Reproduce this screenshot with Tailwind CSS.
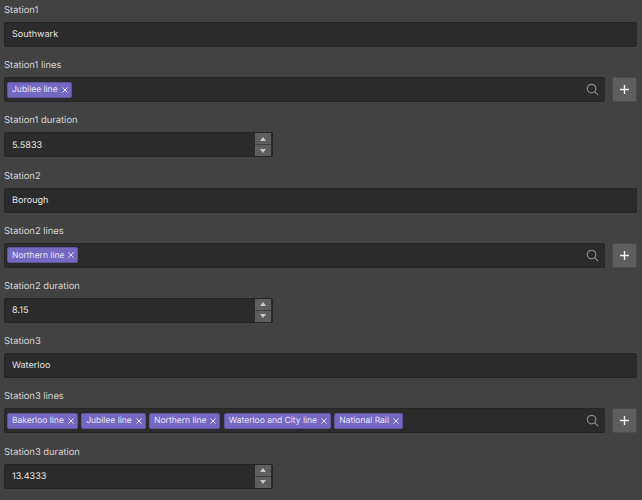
<!DOCTYPE html>
<html lang="en">
  <head>
    <meta charset="UTF-8" />
    <title>Stations</title>
    <script src="https://cdn.jsdelivr.net/npm/@tailwindcss/browser@4"></script>
  </head>
  <body class="bg-[#424242] h-[500px] overflow-hidden font-['Inter',sans-serif] [text-rendering:geometricPrecision] antialiased text-[9.4px] text-[#d6d6d6]">
    <main class="flex flex-col gap-[12.2px] pt-[4px] pl-[4px] pr-[5px]">
      <!-- Station 1 -->
      <div>
        <label class="block h-[18px] leading-[14px]">Station1</label>
        <div class="h-[25px] flex items-center px-[7px] rounded-[2px] bg-[#2b2b2b] border border-[#252525] text-[9.1px] text-[#e4e4e4]"><span class="pt-[1px]">Southwark</span></div>
      </div>
      <div>
        <label class="block h-[18px] leading-[14px]">Station1 lines</label>
        <div class="flex gap-[7px]">
          <div class="flex-1 h-[25px] flex items-center pl-[2px] pr-[5px] rounded-[2px] bg-[#2b2b2b] border border-[#252525]">
            <span class="h-[16px] flex items-center gap-[4px] pl-[4px] pr-[3px] rounded-[2px] bg-[#7468c2] border border-[#5f5599] text-[8.5px] text-[#e8e6f5]"><span class="pt-[2px]">Jubilee line</span>
              <svg class="w-[6px] h-[6px]" viewBox="0 0 8 8" fill="none" stroke="#e8e6f5" stroke-width="1.3"><path d="M.5.5l7 7M7.5.5l-7 7" /></svg>
            </span>
            <svg class="ml-auto w-[13px] h-[13px]" viewBox="0 0 14 14" fill="none" stroke="#8a8a8a" stroke-width="1.3"><circle cx="6" cy="6" r="4.6" /><path d="M9.3 9.3l3.7 3.7" /></svg>
          </div>
          <button class="w-[25px] h-[25px] flex items-center justify-center rounded-[2px] bg-[#5e5e5e] border border-[#4c4c4c]">
            <svg class="w-[9px] h-[9px]" viewBox="0 0 9 9" fill="none" stroke="#f0f0f0" stroke-width="1.4"><path d="M4.5 0v9M0 4.5h9" /></svg>
          </button>
        </div>
      </div>
      <div>
        <label class="block h-[18px] leading-[14px]">Station1 duration</label>
        <div class="w-[269px] h-[25px] flex items-center pl-[7px] pr-[1px] rounded-[2px] bg-[#2b2b2b] border border-[#252525] text-[9.1px] text-[#e4e4e4]"><span class="pt-[1px]">5.5833</span>
          <div class="ml-auto w-[16px] bg-[#404040] flex flex-col gap-[1px]">
            <span class="h-[11px] flex items-center justify-center bg-[#5e5e5e]"><svg class="w-[6px] h-[4px]" viewBox="0 0 6 4" fill="#c8c8c8"><path d="M3 0l3 4H0z" /></svg></span>
            <span class="h-[11px] flex items-center justify-center bg-[#5e5e5e]"><svg class="w-[6px] h-[4px]" viewBox="0 0 6 4" fill="#c8c8c8"><path d="M0 0h6L3 4z" /></svg></span>
          </div>
        </div>
      </div>

      <!-- Station 2 -->
      <div>
        <label class="block h-[18px] leading-[14px]">Station2</label>
        <div class="h-[25px] flex items-center px-[7px] rounded-[2px] bg-[#2b2b2b] border border-[#252525] text-[9.1px] text-[#e4e4e4]"><span class="pt-[1px]">Borough</span></div>
      </div>
      <div>
        <label class="block h-[18px] leading-[14px]">Station2 lines</label>
        <div class="flex gap-[7px]">
          <div class="flex-1 h-[25px] flex items-center pl-[2px] pr-[5px] rounded-[2px] bg-[#2b2b2b] border border-[#252525]">
            <span class="h-[16px] flex items-center gap-[4px] pl-[4px] pr-[3px] rounded-[2px] bg-[#7468c2] border border-[#5f5599] text-[8.5px] text-[#e8e6f5]"><span class="pt-[2px]">Northern line</span>
              <svg class="w-[6px] h-[6px]" viewBox="0 0 8 8" fill="none" stroke="#e8e6f5" stroke-width="1.3"><path d="M.5.5l7 7M7.5.5l-7 7" /></svg>
            </span>
            <svg class="ml-auto w-[13px] h-[13px]" viewBox="0 0 14 14" fill="none" stroke="#8a8a8a" stroke-width="1.3"><circle cx="6" cy="6" r="4.6" /><path d="M9.3 9.3l3.7 3.7" /></svg>
          </div>
          <button class="w-[25px] h-[25px] flex items-center justify-center rounded-[2px] bg-[#5e5e5e] border border-[#4c4c4c]">
            <svg class="w-[9px] h-[9px]" viewBox="0 0 9 9" fill="none" stroke="#f0f0f0" stroke-width="1.4"><path d="M4.5 0v9M0 4.5h9" /></svg>
          </button>
        </div>
      </div>
      <div>
        <label class="block h-[18px] leading-[14px]">Station2 duration</label>
        <div class="w-[269px] h-[25px] flex items-center pl-[7px] pr-[1px] rounded-[2px] bg-[#2b2b2b] border border-[#252525] text-[9.1px] text-[#e4e4e4]"><span class="pt-[1px]">8.15</span>
          <div class="ml-auto w-[16px] bg-[#404040] flex flex-col gap-[1px]">
            <span class="h-[11px] flex items-center justify-center bg-[#5e5e5e]"><svg class="w-[6px] h-[4px]" viewBox="0 0 6 4" fill="#c8c8c8"><path d="M3 0l3 4H0z" /></svg></span>
            <span class="h-[11px] flex items-center justify-center bg-[#5e5e5e]"><svg class="w-[6px] h-[4px]" viewBox="0 0 6 4" fill="#c8c8c8"><path d="M0 0h6L3 4z" /></svg></span>
          </div>
        </div>
      </div>

      <!-- Station 3 -->
      <div>
        <label class="block h-[18px] leading-[14px]">Station3</label>
        <div class="h-[25px] flex items-center px-[7px] rounded-[2px] bg-[#2b2b2b] border border-[#252525] text-[9.1px] text-[#e4e4e4]"><span class="pt-[1px]">Waterloo</span></div>
      </div>
      <div>
        <label class="block h-[18px] leading-[14px]">Station3 lines</label>
        <div class="flex gap-[7px]">
          <div class="flex-1 h-[25px] flex items-center gap-[3.3px] pl-[2px] pr-[5px] rounded-[2px] bg-[#2b2b2b] border border-[#252525]">
            <span class="h-[16px] flex items-center gap-[4px] pl-[4px] pr-[3px] rounded-[2px] bg-[#7468c2] border border-[#5f5599] text-[8.5px] text-[#e8e6f5]"><span class="pt-[2px]">Bakerloo line</span>
              <svg class="w-[6px] h-[6px]" viewBox="0 0 8 8" fill="none" stroke="#e8e6f5" stroke-width="1.3"><path d="M.5.5l7 7M7.5.5l-7 7" /></svg>
            </span>
            <span class="h-[16px] flex items-center gap-[4px] pl-[4px] pr-[3px] rounded-[2px] bg-[#7468c2] border border-[#5f5599] text-[8.5px] text-[#e8e6f5]"><span class="pt-[2px]">Jubilee line</span>
              <svg class="w-[6px] h-[6px]" viewBox="0 0 8 8" fill="none" stroke="#e8e6f5" stroke-width="1.3"><path d="M.5.5l7 7M7.5.5l-7 7" /></svg>
            </span>
            <span class="h-[16px] flex items-center gap-[4px] pl-[4px] pr-[3px] rounded-[2px] bg-[#7468c2] border border-[#5f5599] text-[8.5px] text-[#e8e6f5]"><span class="pt-[2px]">Northern line</span>
              <svg class="w-[6px] h-[6px]" viewBox="0 0 8 8" fill="none" stroke="#e8e6f5" stroke-width="1.3"><path d="M.5.5l7 7M7.5.5l-7 7" /></svg>
            </span>
            <span class="h-[16px] flex items-center gap-[4px] pl-[4px] pr-[3px] rounded-[2px] bg-[#7468c2] border border-[#5f5599] text-[8.5px] text-[#e8e6f5]"><span class="pt-[2px]">Waterloo and City line</span>
              <svg class="w-[6px] h-[6px]" viewBox="0 0 8 8" fill="none" stroke="#e8e6f5" stroke-width="1.3"><path d="M.5.5l7 7M7.5.5l-7 7" /></svg>
            </span>
            <span class="h-[16px] flex items-center gap-[4px] pl-[4px] pr-[3px] rounded-[2px] bg-[#7468c2] border border-[#5f5599] text-[8.5px] text-[#e8e6f5]"><span class="pt-[2px]">National Rail</span>
              <svg class="w-[6px] h-[6px]" viewBox="0 0 8 8" fill="none" stroke="#e8e6f5" stroke-width="1.3"><path d="M.5.5l7 7M7.5.5l-7 7" /></svg>
            </span>
            <svg class="ml-auto w-[13px] h-[13px]" viewBox="0 0 14 14" fill="none" stroke="#8a8a8a" stroke-width="1.3"><circle cx="6" cy="6" r="4.6" /><path d="M9.3 9.3l3.7 3.7" /></svg>
          </div>
          <button class="w-[25px] h-[25px] flex items-center justify-center rounded-[2px] bg-[#5e5e5e] border border-[#4c4c4c]">
            <svg class="w-[9px] h-[9px]" viewBox="0 0 9 9" fill="none" stroke="#f0f0f0" stroke-width="1.4"><path d="M4.5 0v9M0 4.5h9" /></svg>
          </button>
        </div>
      </div>
      <div>
        <label class="block h-[18px] leading-[14px]">Station3 duration</label>
        <div class="w-[269px] h-[25px] flex items-center pl-[7px] pr-[1px] rounded-[2px] bg-[#2b2b2b] border border-[#252525] text-[9.1px] text-[#e4e4e4]"><span class="pt-[1px]">13.4333</span>
          <div class="ml-auto w-[16px] bg-[#404040] flex flex-col gap-[1px]">
            <span class="h-[11px] flex items-center justify-center bg-[#5e5e5e]"><svg class="w-[6px] h-[4px]" viewBox="0 0 6 4" fill="#c8c8c8"><path d="M3 0l3 4H0z" /></svg></span>
            <span class="h-[11px] flex items-center justify-center bg-[#5e5e5e]"><svg class="w-[6px] h-[4px]" viewBox="0 0 6 4" fill="#c8c8c8"><path d="M0 0h6L3 4z" /></svg></span>
          </div>
        </div>
      </div>
    </main>
  </body>
</html>
